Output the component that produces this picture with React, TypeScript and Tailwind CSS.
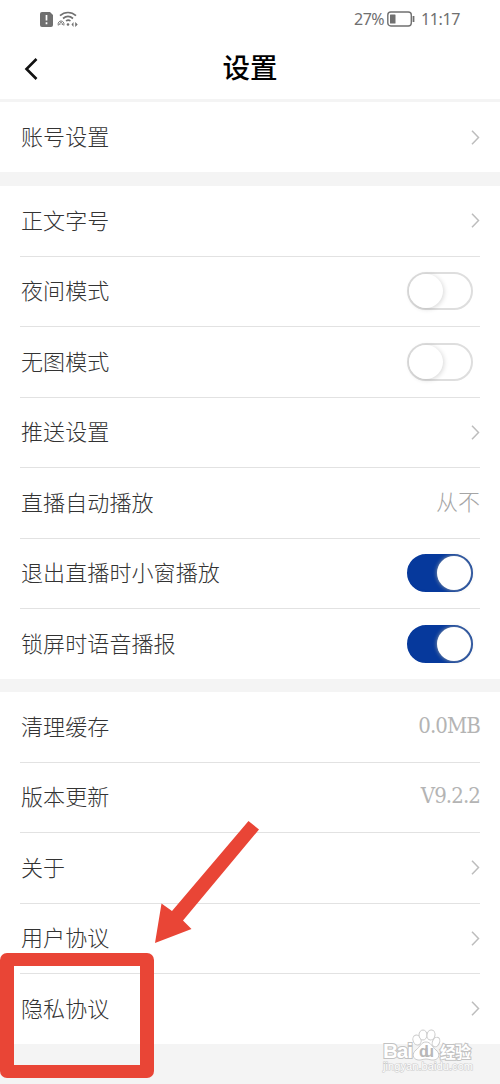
import React from 'react';
import clsx from 'clsx';

interface SettingItem {
  label: string;
  type: 'link' | 'switch' | 'value';
  value?: string;
  checked?: boolean;
}

const groups: SettingItem[][] = [
  [{ label: '账号设置', type: 'link' }],
  [
    { label: '正文字号', type: 'link' },
    { label: '夜间模式', type: 'switch', checked: false },
    { label: '无图模式', type: 'switch', checked: false },
    { label: '推送设置', type: 'link' },
    { label: '直播自动播放', type: 'value', value: '从不' },
    { label: '退出直播时小窗播放', type: 'switch', checked: true },
    { label: '锁屏时语音播报', type: 'switch', checked: true },
  ],
  [
    { label: '清理缓存', type: 'value', value: '0.0MB' },
    { label: '版本更新', type: 'value', value: 'V9.2.2' },
    { label: '关于', type: 'link' },
    { label: '用户协议', type: 'link' },
    { label: '隐私协议', type: 'link' },
  ],
];

const StatusBar: React.FC = () => (
  <div className="flex h-[38px] items-center justify-between pl-[40px] pr-[40px] text-[#707070]">
    <div className="flex items-center gap-[4px]">
      {/* SIM alert */}
      <svg className="h-[15px] w-[13px]" viewBox="0 0 13 15">
        <path d="M2 0h8l3 3v10a2 2 0 0 1-2 2H2a2 2 0 0 1-2-2V2a2 2 0 0 1 2-2z" fill="currentColor" />
        <path d="M6.5 3v5.5M6.5 10.2v2" stroke="#fff" strokeWidth="1.7" />
      </svg>
      {/* Wi-Fi */}
      <svg className="h-[16px] w-[21px]" viewBox="0 0 21 16" fill="none" stroke="currentColor">
        <path d="M3 4.7c4.7-4.3 11.3-4.3 16 0M6 7.5c3-2.5 7-2.5 10 0" strokeWidth="1.7" />
        <path d="M9 10c1.3-1 3.2-1 4.5 0" strokeWidth="1.5" />
        <path d="M1.3 14.5c-1.5-6 7-6 5.500 0M2.800 14c-.5-3.500 3-3.500 2.500 0" strokeWidth="1" />
        <circle cx="11" cy="13.5" r="1.3" fill="currentColor" stroke="none" />
        <path d="M16.500 11v5l-2-2.500zM18.200 11v5l2.500-2.500z" fill="currentColor" stroke="none" />
      </svg>
    </div>
    <div className="flex items-center font-['Noto_Sans','Open_Sans',sans-serif] text-[16px] leading-none">
      <span className="w-[31px] tracking-[-0.5px]">27%</span>
      <svg className="ml-[2px] mr-[6px] h-[16px] w-[28px]" viewBox="0 0 28 16">
        <rect x="0.8" y="1" width="23.5" height="14" rx="3" fill="none" stroke="currentColor" strokeWidth="1.4" />
        <rect x="3" y="3.5" width="5.5" height="9" rx="0.5" fill="currentColor" />
        <path d="M26.500 5v6" stroke="currentColor" strokeWidth="1.8" />
      </svg>
      <span className="w-[39px] whitespace-nowrap tracking-[-0.4px]">11:17</span>
    </div>
  </div>
);

const Switch: React.FC<{ checked?: boolean }> = ({ checked }) => (
  <div
    className={clsx(
      'mr-[7px] flex h-[38px] w-[66px] items-center rounded-full border-2',
      checked ? 'justify-end border-[#06399c] bg-[#06399c]' : 'justify-start border-[#dedede] bg-white'
    )}
  >
    <div
      className={clsx(
        'size-[34px] rounded-full bg-white',
        checked ? 'shadow-[0_0_4px_rgba(190,190,170,0.8)]' : 'shadow-[1px_1px_5px_rgba(0,0,0,0.16)]'
      )}
    />
  </div>
);

const Chevron: React.FC = () => (
  <svg className="h-[15px] w-[9px]" viewBox="0 0 9 15" fill="none" stroke="#bdbdbd" strokeWidth="1.5">
    <path d="M1 .8l6.500 6.700L1 14.200" />
  </svg>
);

const SettingRow: React.FC<{ item: SettingItem; last: boolean }> = ({ item, last }) => (
  <div
    className={clsx(
      'mx-[20px] flex flex-1 items-center justify-between',
      !last && 'border-b border-[#e2e2e2]'
    )}
  >
    <span className="pb-[4px] pl-[1px] text-[22px] font-light leading-none tracking-[0.1px] text-[#333]">
      {item.label}
    </span>
    {item.type === 'link' && <Chevron />}
    {item.type === 'switch' && <Switch checked={item.checked} />}
    {item.type === 'value' && (
      <span
        className={clsx(
          "font-['DejaVu_Serif_Condensed','DejaVu_Serif','Noto_Sans_CJK_SC',serif] text-[22px] font-light leading-none [font-stretch:condensed]",
          item.value === '从不' ? 'text-[#a5a5a5]' : 'pb-[2px] tracking-[-0.9px] text-[#b4b4b4]'
        )}
      >
        {item.value}
      </span>
    )}
  </div>
);

const Watermark: React.FC = () => (
  <svg className="absolute left-[380px] top-[1026px] h-[54px] w-[100px]" viewBox="0 0 100 54">
    <g fill="#fff" stroke="#cbcbcb" strokeWidth="1">
      <ellipse cx="37" cy="14" rx="4" ry="5" transform="rotate(-20 37 14)" />
      <ellipse cx="43" cy="9" rx="4" ry="5" />
      <ellipse cx="51" cy="9" rx="4" ry="5" transform="rotate(10 51 9)" />
      <ellipse cx="56" cy="16" rx="3.5" ry="5" transform="rotate(25 56 16)" />
      <path d="M46 16c5 0 6 5 10 8s4 9-2 10c-3 .5-5-1-8-1s-5 1.500-8 1c-6-1-6-7-2-10s5-8 10-8z" />
    </g>
    <g
      fill="#fff"
      stroke="#c2c2c2"
      strokeWidth="2"
      paintOrder="stroke"
      fontWeight="bold"
      fontFamily="'Liberation Sans', 'Noto Sans CJK SC', sans-serif"
    >
      <text x="3" y="32" fontSize="21" textLength="30">Bai</text>
      <text x="39" y="31" fontSize="16" textLength="15" fill="#b8b8b8" stroke="none">du</text>
      <text x="60" y="32" fontSize="16" textLength="31">经验</text>
      <text x="3" y="44" fontSize="11" textLength="90" strokeWidth="1.2" stroke="#cdcdcd" fontWeight="normal">
        jingyan.baidu.com
      </text>
    </g>
  </svg>
);

const App: React.FC = () => {
  return (
    <div className="relative flex h-[1084px] w-[500px] flex-col overflow-hidden bg-[#f4f4f4] font-['Noto_Sans_CJK_SC',sans-serif]">
      {/* Header */}
      <header className="h-[99px] shrink-0 bg-white">
        <StatusBar />
        <div className="flex h-[61px] items-center px-[24px]">
          <svg className="h-[24px] w-[14px]" viewBox="0 0 14 24" fill="none" stroke="#111" strokeWidth="2.6">
            <path d="M12.500 2L2.500 12l10 10" />
          </svg>
          <h1 className="flex-1 pb-[3px] pr-[14px] text-center text-[27.5px] font-medium leading-none text-black">
            设置
          </h1>
        </div>
      </header>

      {/* Setting groups */}
      <main className="flex flex-col pt-[3px]">
        <section className="flex h-[70px] flex-col bg-white">
          <SettingRow item={groups[0][0]} last />
        </section>
        <section className="mt-[14px] flex h-[492.5px] flex-col bg-white">
          {groups[1].map((item, i) => (
            <SettingRow key={item.label} item={item} last={i === groups[1].length - 1} />
          ))}
        </section>
        <section className="mt-[13.5px] flex h-[351.5px] flex-col bg-white">
          {groups[2].map((item, i) => (
            <SettingRow key={item.label} item={item} last={i === groups[2].length - 1} />
          ))}
        </section>
      </main>

      <Watermark />

      {/* Highlight around the privacy entry */}
      <div className="absolute left-0 top-[953px] h-[125px] w-[154px] rounded-[7px] bg-[#e94536] [clip-path:polygon(evenodd,0_0,100%_0,100%_100%,0_100%,0_0,14px_13px,140px_13px,140px_112px,14px_112px,14px_13px)]" />
      <svg className="absolute left-[150px] top-[815px] h-[135px] w-[115px]" viewBox="150 815 115 135">
        <path d="M248.500 821L259 829.500 183 920.500l8.500 8.500-36.500 14 6.500-39.500 10.500 7.500z" fill="#e94536" />
      </svg>
    </div>
  );
};

export default App;
